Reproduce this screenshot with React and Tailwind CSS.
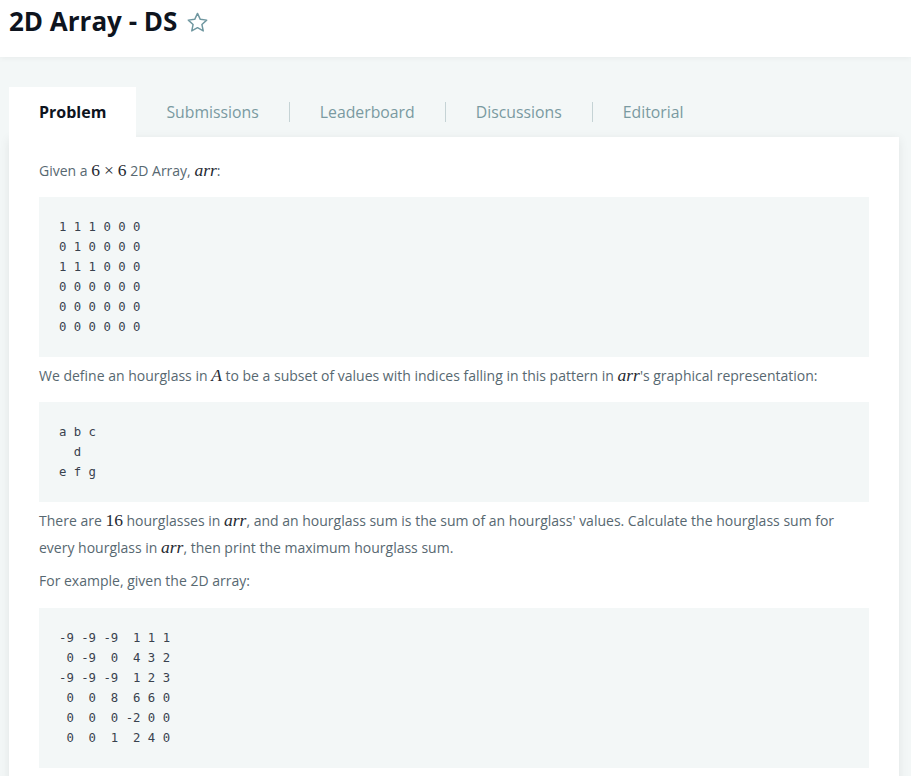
import React from "react";

const sans = { fontFamily: '"Open Sans", "Noto Sans", sans-serif' };

function M({ children, italic }) {
  return (
    <span
      className={"inline-block text-[17.5px] leading-none text-[#1f2a33] " + (italic ? "italic" : "")}
      style={{ fontFamily: '"Liberation Serif", "DejaVu Serif", serif' }}
    >
      {children}
    </span>
  );
}

function Code({ lines, className = "" }) {
  return (
    <pre
      className={"bg-[#f3f7f7] px-5 py-5 text-[12.3px] leading-[20px] text-[#39424e] " + className}
      style={{ fontFamily: '"DejaVu Sans Mono", monospace' }}
    >
      {lines.join("\n")}
    </pre>
  );
}

function Tab({ label, sep }) {
  return (
    <div className="flex items-center">
      <div className="px-[30px] pt-[2px] text-[15.8px] text-[#7a9aa1]">{label}</div>
      {sep && <div className="h-[20px] w-px bg-[#c5d3d5]" />}
    </div>
  );
}

export default function App() {
  return (
    <div className="min-h-[776px] w-[911px] overflow-hidden bg-[#f3f7f7]" style={sans}>
      <header className="relative z-10 flex h-[57px] items-start bg-white pl-[9px] pt-[3px] shadow-[0_1px_6px_rgba(0,0,0,0.05)]">
        <h1 className="text-[26px] font-bold leading-[36px] text-[#0e141e]">2D Array - DS</h1>
        <svg className="ml-[9px] mt-[8px]" width="23" height="23" viewBox="0 0 24 24" fill="none" stroke="#6f97a0" strokeWidth="1.5" strokeLinejoin="round">
          <path d="M12 2.5l2.9 6.2 6.7.8-5 4.6 1.4 6.7L12 17.4l-6 3.4 1.4-6.7-5-4.6 6.7-.8z" />
        </svg>
      </header>
      <div className="pl-[9px] pr-[12px] pt-[30px]">
        <div className="flex h-[50px] items-center">
          <div className="flex h-[50px] items-center bg-white px-[30px] text-[16px] font-bold text-[#0e141e]">
            Problem
          </div>
          <Tab label="Submissions" sep />
          <Tab label="Leaderboard" sep />
          <Tab label="Discussions" sep />
          <Tab label="Editorial" />
        </div>
        <div className="bg-white px-[30px] pt-[20px] pb-10 text-[14px] leading-[27px] text-[#576871] shadow-[0_2px_10px_rgba(0,0,0,0.08)]">
          <p>
            Given a <M>6<span className="mx-[4px]">×</span>6</M> 2D Array, <M italic>arr</M>:
          </p>
          <Code
            className="mt-[12.5px]"
            lines={["1 1 1 0 0 0", "0 1 0 0 0 0", "1 1 1 0 0 0", "0 0 0 0 0 0", "0 0 0 0 0 0", "0 0 0 0 0 0"]}
          />
          <p className="mt-[5.5px]">
            We define an hourglass in <M italic>A</M> to be a subset of values with indices falling in this pattern in <M italic>arr</M>'s graphical representation:
          </p>
          <Code className="mt-[12.5px]" lines={["a b c", "  d", "e f g"]} />
          <p className="mt-[5.5px]">
            There are <M>16</M> hourglasses in <M italic>arr</M>, and an hourglass sum is the sum of an hourglass' values. Calculate the hourglass sum for every hourglass in <M italic>arr</M>, then print the maximum hourglass sum.
          </p>
          <p className="mt-[6px]">For example, given the 2D array:</p>
          <Code
            className="mt-[13.5px]"
            lines={["-9 -9 -9  1 1 1", " 0 -9  0  4 3 2", "-9 -9 -9  1 2 3", " 0  0  8  6 6 0", " 0  0  0 -2 0 0", " 0  0  1  2 4 0"]}
          />
        </div>
      </div>
    </div>
  );
}
